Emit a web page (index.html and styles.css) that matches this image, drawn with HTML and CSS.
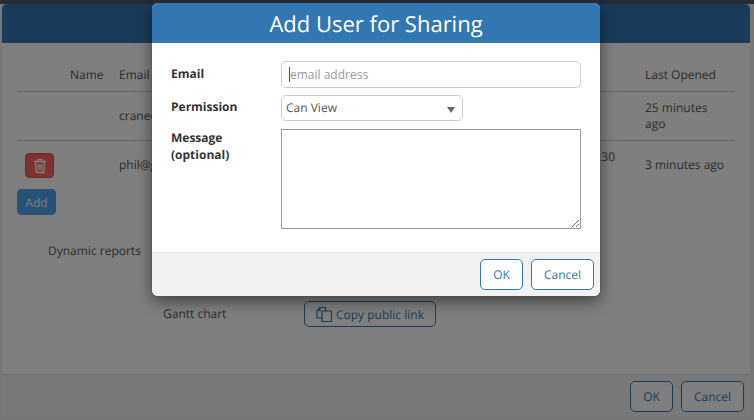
FILE: index.html
```html
<!DOCTYPE html>
<html lang="en">
<head>
    <meta charset="UTF-8">
    <title>Add User for Sharing</title>
    <link rel="stylesheet" href="styles.css">
</head>
<body>
    <div class="top-strip"></div>

    <div class="back-dialog">
        <div class="back-header"></div>
        <div class="back-content">
            <div class="share-table">
                <div class="share-row head-row">
                    <span class="col-name">Name</span>
                    <span class="col-email">Email</span>
                    <span class="col-opened">Last Opened</span>
                </div>
                <div class="share-row first-row">
                    <span class="col-email">crane@</span>
                    <span class="col-opened">25 minutes ago</span>
                </div>
                <div class="share-row second-row">
                    <span class="col-action">
                        <button class="btn-delete" type="button">
                            <svg width="14" height="16" viewBox="0 0 14 16" fill="none" stroke="currentColor">
                                <path d="M1 3.500h12M5 3.500V1.500h4v2M2.500 3.500l.6 11h7.800l.6-11" stroke-width="1.300"/>
                                <path d="M5 6v6.500M7 6v6.500M9 6v6.500" stroke-width="1.200"/>
                            </svg>
                        </button>
                    </span>
                    <span class="col-email">phil@g</span>
                    <span class="col-extra">4:30</span>
                    <span class="col-opened">3 minutes ago</span>
                </div>
            </div>
            <button class="btn-add" type="button">Add</button>
            <div class="report-title">Dynamic reports</div>
            <div class="gantt-row">
                <span class="gantt-label">Gantt chart</span>
                <button class="btn-outline btn-copy" type="button">
                    <svg width="16" height="16" viewBox="0 0 16 16" fill="none" stroke="currentColor" stroke-width="1.200">
                        <path d="M6 12H1V4.500L4 1.500h5.500V5"/>
                        <path d="M1 4.500h3v-3"/>
                        <path d="M6 5h9.500v10.500H6z"/>
                    </svg>
                    Copy public link
                </button>
            </div>
        </div>
        <div class="back-footer">
            <button class="btn-outline btn-ok" type="button">OK</button>
            <button class="btn-outline btn-cancel" type="button">Cancel</button>
        </div>
    </div>

    <div class="scrim"></div>

    <div class="dialog">
        <div class="dialog-header">Add User for Sharing</div>
        <div class="dialog-body">
            <label class="field-label label-email">Email</label>
            <div class="input-wrap">
                <input class="text-input" type="text" placeholder="email address">
            </div>
            <label class="field-label label-permission">Permission</label>
            <div class="select-wrap">Can View</div>
            <label class="field-label label-message">Message (optional)</label>
            <textarea class="message-input"></textarea>
        </div>
        <div class="dialog-footer">
            <button class="btn-outline btn-ok" type="button">OK</button>
            <button class="btn-outline btn-cancel" type="button">Cancel</button>
        </div>
    </div>
</body>
</html>
```

FILE: styles.css
```css
* {
    box-sizing: border-box;
}
html, body {
    margin: 0;
    padding: 0;
    height: 420px;
    overflow: hidden;
}
body {
    font-family: 'Open Sans', 'Noto Sans', sans-serif;
    font-size: 12px;
    line-height: 16px;
    text-rendering: geometricPrecision;
    color: #555;
    background: #eee;
}
button {
    font-family: inherit;
    font-size: 12px;
    text-rendering: geometricPrecision;
    cursor: pointer;
}
.top-strip {
    height: 4px;
    background: #4a586c;
}
.back-dialog {
    display: flex;
    flex-direction: column;
    width: 748px;
    height: 413px;
    margin-left: 2px;
    background: #fff;
    border-radius: 5px;
    overflow: hidden;
}
.back-header {
    height: 39px;
    flex: none;
    background: #3277b2;
}
.back-content {
    flex: 1;
    padding: 0 15px;
}
.share-table {
    width: 718px;
}
.share-row {
    display: grid;
    grid-template-columns: 53px 49px 1fr 90px;
    align-items: center;
    border-bottom: 1px solid #ccc;
}
.col-action {
    grid-column: 1;
    grid-row: 1;
}
.col-name {
    grid-column: 2;
    grid-row: 1;
}
.col-email {
    grid-column: 3;
    grid-row: 1;
}
.col-extra {
    grid-column: 3;
    grid-row: 1;
    justify-self: end;
    margin: -17px 30px 0 0;
}
.col-opened {
    grid-column: 4;
    grid-row: 1;
}
.head-row {
    height: 49px;
    padding-top: 15px;
}
.first-row {
    height: 49px;
}
.first-row .col-opened {
    max-width: 80px;
}
.second-row {
    height: 48px;
    border-bottom: none;
}
.btn-delete {
    display: flex;
    align-items: center;
    justify-content: center;
    width: 29px;
    height: 25px;
    margin: 1px 0 0 8px;
    padding: 0;
    color: #fff;
    background: #ff6660;
    border: 1px solid #e05550;
    border-radius: 4px;
}
.btn-add {
    display: block;
    width: 39px;
    height: 26px;
    padding: 0;
    color: #fff;
    background: #4aa4ea;
    border: 1px solid #4aa4ea;
    border-radius: 4px;
}
.report-title {
    margin: 28px 0 0 31px;
}
.gantt-row {
    display: flex;
    align-items: center;
    margin: 42px 0 0 146px;
}
.gantt-label {
    width: 141px;
}
.btn-outline {
    color: #3277b2;
    background: #fff;
    border: 1px solid #3277b2;
    border-radius: 5px;
    padding: 0;
}
.btn-copy {
    display: flex;
    align-items: center;
    gap: 4px;
    width: 132px;
    height: 26px;
    padding-left: 11px;
    white-space: nowrap;
}
.back-footer, .dialog-footer {
    display: flex;
    justify-content: flex-end;
    gap: 8px;
    flex: none;
    background: #f2f2f2;
    border-top: 1px solid #e2e2e2;
}
.back-footer {
    height: 43px;
    padding: 6px 6px 0 0;
}
.btn-ok {
    width: 43px;
    height: 31px;
}
.btn-cancel {
    width: 63px;
    height: 31px;
}
.scrim {
    position: absolute;
    inset: 0;
    background: rgba(0, 0, 0, 0.5);
}
.dialog {
    position: absolute;
    top: 3px;
    left: 152px;
    width: 448px;
    height: 293px;
    display: flex;
    flex-direction: column;
    background: #fff;
    border-radius: 6px;
    overflow: hidden;
    box-shadow: 0 5px 15px rgba(0, 0, 0, 0.5);
}
.dialog-header {
    height: 40px;
    flex: none;
    text-align: center;
    font-size: 22px;
    line-height: 42px;
    color: #fff;
    background: #3277b2;
}
.dialog-body {
    flex: 1;
    display: grid;
    grid-template-columns: 110px 300px;
    grid-template-rows: 27px 26px 100px;
    row-gap: 7px;
    align-content: start;
    padding: 18px 0 0 19px;
}
.field-label {
    font-weight: 700;
    color: #333;
}
.label-email {
    margin-top: 5px;
}
.label-permission {
    margin-top: 4px;
}
.label-message {
    margin-top: 1px;
    line-height: 17px;
    width: 80px;
}
.input-wrap {
    position: relative;
}
.input-wrap::before {
    content: "";
    position: absolute;
    left: 8px;
    top: 6px;
    width: 1px;
    height: 15px;
    background: #555;
}
.text-input {
    display: block;
    width: 100%;
    height: 100%;
    padding: 0 8px;
    font-family: inherit;
    font-size: 12px;
    background: #fff;
    border: 1px solid #ccc;
    border-radius: 5px;
    outline: none;
}
.text-input::placeholder {
    color: #999;
    opacity: 1;
}
.select-wrap {
    position: relative;
    width: 182px;
    padding: 3px 0 0 4px;
    line-height: 17px;
    border: 1px solid #ccc;
    border-radius: 5px;
}
.select-wrap::after {
    content: "";
    position: absolute;
    right: 7px;
    top: 11px;
    border-left: 4.500px solid transparent;
    border-right: 4.500px solid transparent;
    border-top: 6px solid #666;
}
.message-input {
    display: block;
    width: 300px;
    height: 100px;
    margin: 1px 0 0;
    background: #fff;
    border: 1px solid #999;
    border-radius: 0;
    outline: none;
}
.dialog-footer {
    height: 44px;
    padding: 6px 6px 0 0;
}
```
